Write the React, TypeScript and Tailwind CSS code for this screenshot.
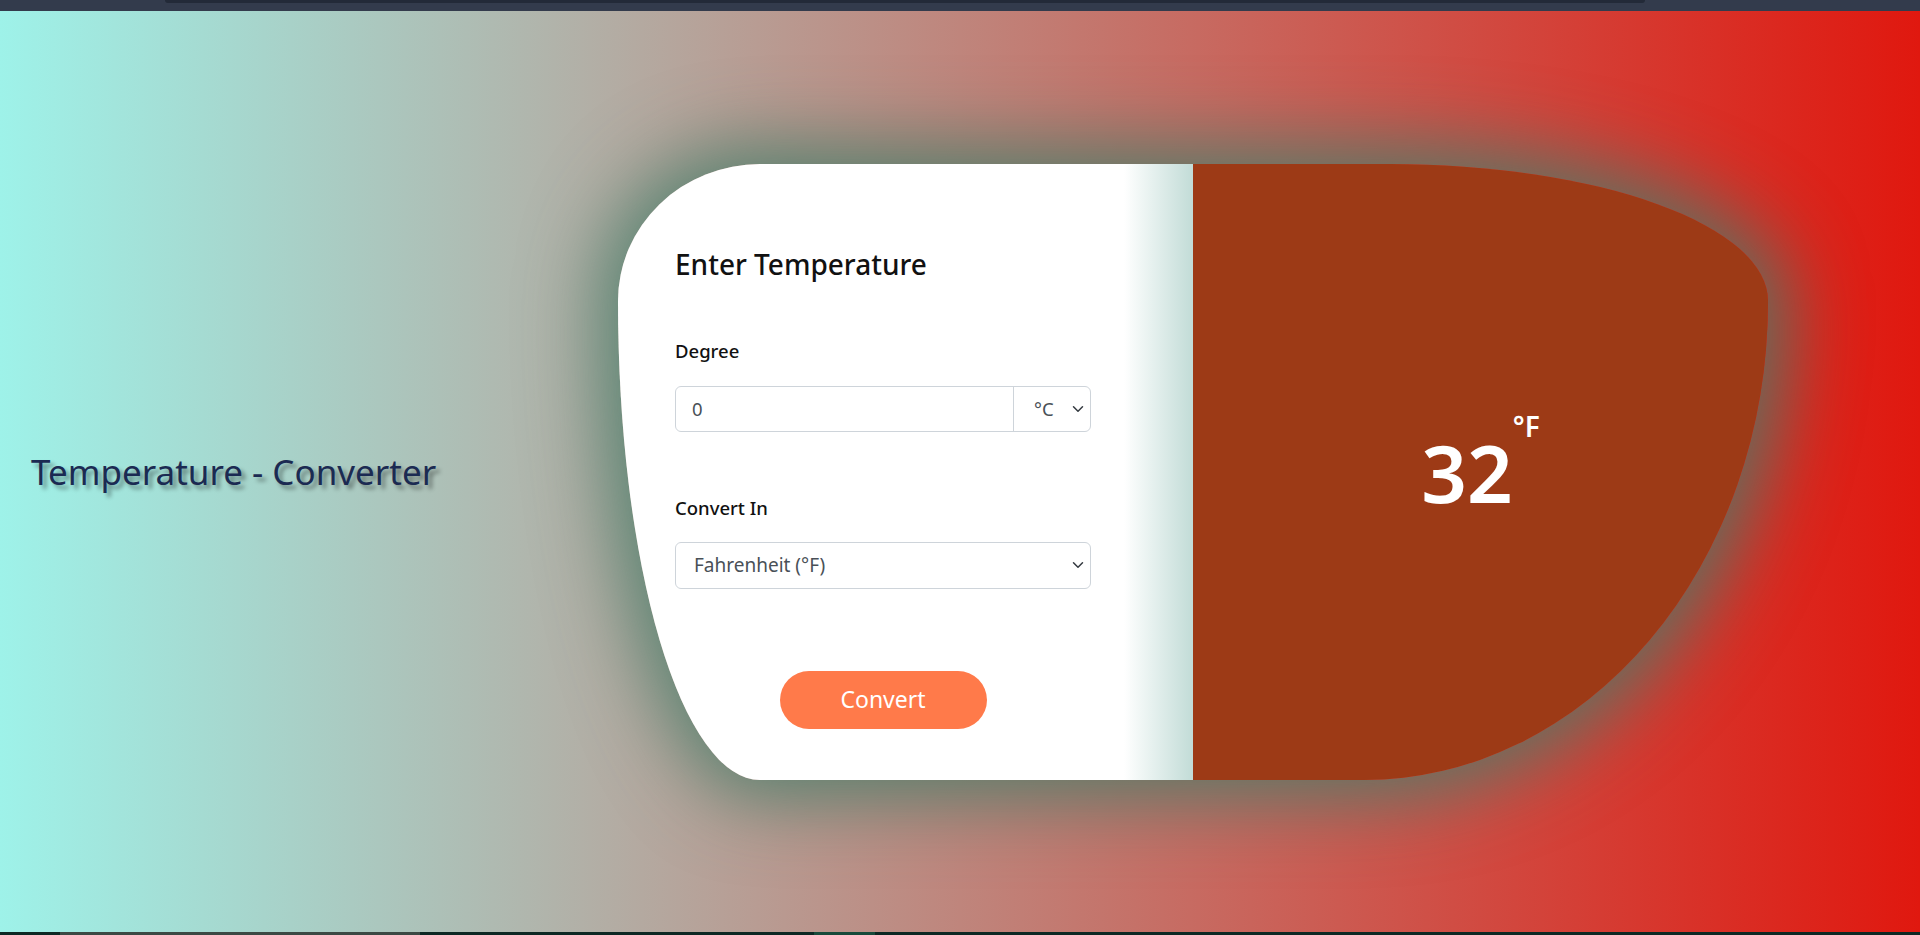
import React from "react";

function Chevron() {
  return (
    <svg width="16" height="12" viewBox="0 0 16 16" fill="none" aria-hidden="true">
      <path d="m2 5 6 6 6-6" stroke="#343a40" strokeWidth="2" strokeLinecap="round" strokeLinejoin="round" />
    </svg>
  );
}

export default function App() {
  return (
    <div className="w-[1920px] h-[935px] flex flex-col overflow-hidden font-['Noto_Sans',sans-serif]">
      <div className="h-[11px] bg-[#333b4c] shrink-0">
        <div className="ml-[165px] w-[1480px] h-[3px] bg-[#232a38] rounded-b-[3px]" />
      </div>
      <main className="flex-1 flex items-center bg-[linear-gradient(to_right,#9ef2e9,#e0180f)]">
        <div className="w-[618px] shrink-0 pl-[31px]">
          <h1 className="text-[35px] leading-[1.2] font-normal text-[#1b2a52] [text-shadow:4px_4px_4px_rgba(0,0,0,0.4)]">
            Temperature - Converter
          </h1>
        </div>
        <div className="w-[1150px] h-[616px] shrink-0 flex overflow-hidden rounded-tl-[142px_137px] rounded-bl-[142px_478px] rounded-tr-[378px_137px] rounded-br-[404px_478px] shadow-[0_0_75px_20px_rgba(70,125,105,0.85)]">
          <div className="w-[575px] shrink-0 bg-[linear-gradient(to_right,#ffffff_0%,#ffffff_88%,#c2dcd7_100%)] pl-[57px] pt-[83px]">
            <div className="w-[416px] flex flex-col">
              <h3 className="text-[28px] leading-[34px] font-medium text-[#111]">Enter Temperature</h3>
              <label className="mt-[57px] text-[18.5px] leading-[26px] font-medium text-[#111]">Degree</label>
              <div className="mt-[22px] h-[46px] flex border border-[#ced4da] rounded-[6px] bg-white">
                <div className="flex-1 flex items-center pl-[16px] text-[18.5px] text-[#495057]">0</div>
                <div className="w-[77px] flex items-center justify-between border-l border-[#ced4da] pl-[20px] pr-[4px] text-[18.5px] text-[#495057]">
                  <span>°C</span>
                  <Chevron />
                </div>
              </div>
              <label className="mt-[63px] text-[18.5px] leading-[26px] font-medium text-[#111]">Convert In</label>
              <div className="mt-[21px] h-[47px] flex items-center justify-between border border-[#ced4da] rounded-[6px] bg-white pl-[18px] pr-[4px] text-[19px] text-[#495057]">
                <span>Fahrenheit (°F)</span>
                <Chevron />
              </div>
              <div className="mt-[82px] flex justify-center">
                <button className="w-[207px] h-[58px] rounded-full bg-[#ff7a4a] text-white text-[23px] font-normal">
                  Convert
                </button>
              </div>
            </div>
          </div>
          <div className="flex-1 bg-[#9d3a16] flex items-center justify-center">
            <div className="flex items-start text-white">
              <span className="text-[80px] leading-none font-semibold">32</span>
              <span className="text-[28px] leading-none font-semibold mt-[-20px]">°F</span>
            </div>
          </div>
        </div>
      </main>
      <div className="h-[3px] shrink-0 bg-[#0d2824] flex">
        <div className="ml-[60px] w-[360px] bg-[#3c4944]" />
        <div className="ml-[394px] w-[61px] bg-[#184a3b]" />
      </div>
    </div>
  );
}
